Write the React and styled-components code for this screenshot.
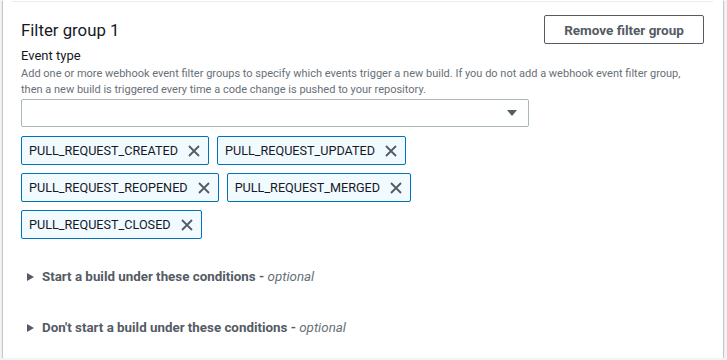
import React from "react";
import styled, { createGlobalStyle } from "styled-components";

const GlobalStyle = createGlobalStyle`
  html, body { margin: 0; padding: 0; }
  body {
    background: #f2f3f3;
    font-family: Roboto, "Liberation Sans", Arial, sans-serif;
    color: #16191f;
  }
  * { box-sizing: border-box; }
`;

const Container = styled.section`
  margin-left: 3px;
  width: 720px;
  height: 358px;
  background: #ffffff;
  padding: 1px 10px 0 9px;
  box-shadow: 0 1px 1px 0 rgba(0, 28, 36, 0.3),
    1px 1px 1px 0 rgba(0, 28, 36, 0.15),
    -1px 1px 1px 0 rgba(0, 28, 36, 0.15);
`;

const Group = styled.div`
  border-top: 1px solid #eaeded;
  padding: 13px 9px 0;
`;

const Header = styled.div`
  display: flex;
  align-items: center;
  justify-content: space-between;
  height: 29px;
`;

const Title = styled.h2`
  margin: 0;
  font-size: 16.8px;
  font-weight: 400;
  line-height: 22px;
  color: #16191f;
`;

const Button = styled.button`
  width: 160px;
  height: 29px;
  background: #ffffff;
  border: 1px solid #545b64;
  border-radius: 2px;
  font-family: inherit;
  font-size: 13.5px;
  font-weight: 700;
  color: #545b64;
  padding: 0;
  cursor: pointer;
`;

const Field = styled.div`
  margin-top: 3px;
  display: flex;
  flex-direction: column;
`;

const Label = styled.label`
  font-size: 13px;
  line-height: 18px;
  color: #16191f;
`;

const Description = styled.p`
  margin: 1px 0 0;
  font-size: 11px;
  line-height: 16px;
  color: #687078;
`;

const Select = styled.div`
  margin-top: 1px;
  width: 508px;
  height: 28px;
  border: 1px solid #aab7b8;
  border-radius: 2px;
  background: #ffffff;
  display: flex;
  align-items: center;
  justify-content: flex-end;
  padding-right: 11px;
`;

const Tokens = styled.div`
  margin-top: 9px;
  display: flex;
  flex-wrap: wrap;
  gap: 8px;
  max-width: 520px;
`;

const Token = styled.div`
  height: 29px;
  display: flex;
  align-items: center;
  gap: 10px;
  padding: 0 8px 0 7px;
  border: 1px solid #0073bb;
  border-radius: 2px;
  background: #f1faff;
  font-size: 12.65px;
  color: #16191f;
`;

const Dismiss = styled.span`
  display: flex;
  width: 12px;
  height: 12px;
  color: #545b64;
`;

const Sections = styled.div`
  margin-top: 12px;
  display: flex;
  flex-direction: column;
`;

const Expander = styled.div`
  height: 51px;
  display: flex;
  align-items: center;
  gap: 8px;
  padding-left: 6px;
  font-size: 13.35px;
  color: #545b64;
`;

const Caret = styled.span`
  width: 0;
  height: 0;
  border-top: 4px solid transparent;
  border-bottom: 4px solid transparent;
  border-left: 7px solid #545b64;
`;

const Heading = styled.span`
  font-weight: 700;
`;

const Optional = styled.i`
  font-weight: 400;
  color: #687078;
`;

const DownCaret = styled.span`
  width: 0;
  height: 0;
  border-left: 5px solid transparent;
  border-right: 5px solid transparent;
  border-top: 6px solid #545b64;
`;

const XIcon = () => (
  <svg width="12" height="12" viewBox="0 0 12 12" fill="none">
    <path d="M1 1L11 11M11 1L1 11" stroke="currentColor" strokeWidth="1.8" />
  </svg>
);

const tokens = [
  "PULL_REQUEST_CREATED",
  "PULL_REQUEST_UPDATED",
  "PULL_REQUEST_REOPENED",
  "PULL_REQUEST_MERGED",
  "PULL_REQUEST_CLOSED",
];

export default function App() {
  return (
    <>
      <GlobalStyle />
      <Container>
        <Group>
          <Header>
            <Title>Filter group 1</Title>
            <Button>Remove filter group</Button>
          </Header>
          <Field>
            <Label>Event type</Label>
            <Description>
              Add one or more webhook event filter groups to specify which events trigger a new build. If you do not add a webhook event filter group, then a new build is triggered every time a code change is pushed to your repository.
            </Description>
            <Select>
              <DownCaret />
            </Select>
            <Tokens>
              {tokens.map((t) => (
                <Token key={t}>
                  {t}
                  <Dismiss>
                    <XIcon />
                  </Dismiss>
                </Token>
              ))}
            </Tokens>
          </Field>
          <Sections>
            <Expander>
              <Caret />
              <span>
                <Heading>Start a build under these conditions - </Heading>
                <Optional>optional</Optional>
              </span>
            </Expander>
            <Expander>
              <Caret />
              <span>
                <Heading>Don't start a build under these conditions - </Heading>
                <Optional>optional</Optional>
              </span>
            </Expander>
          </Sections>
        </Group>
      </Container>
    </>
  );
}
